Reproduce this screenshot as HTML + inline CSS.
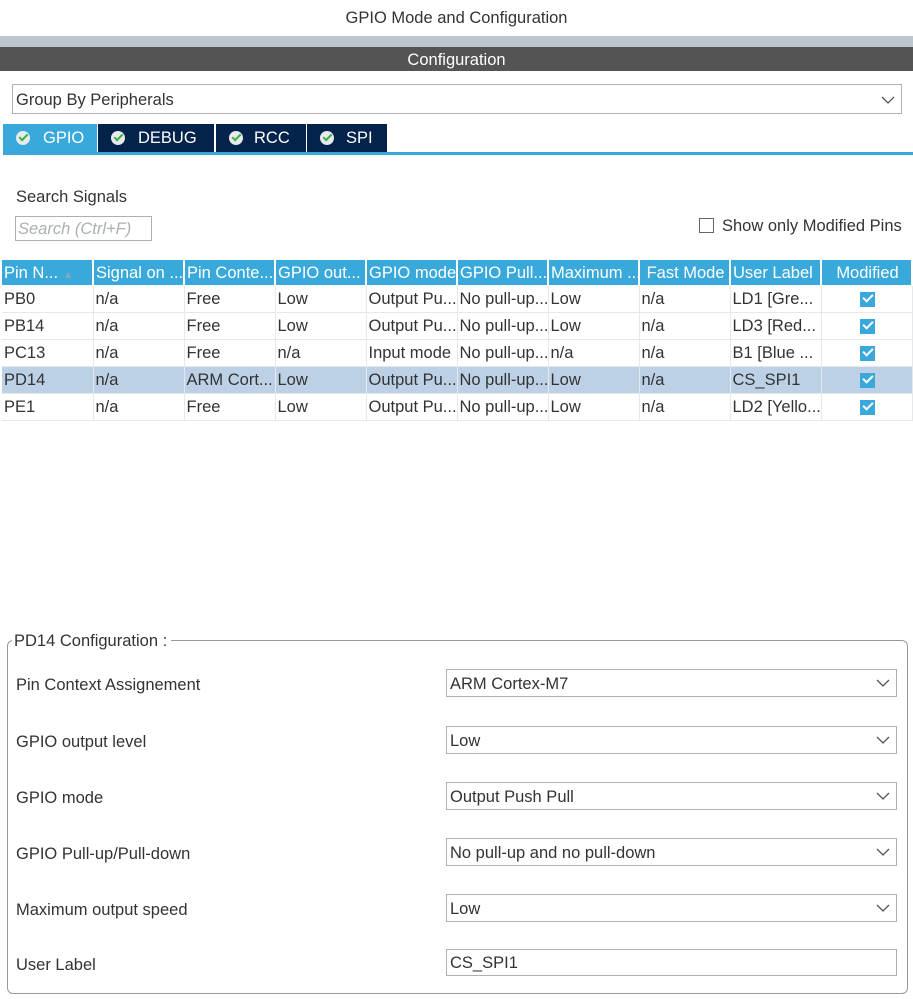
<!DOCTYPE html>
<html><head><meta charset="utf-8"><style>
*{box-sizing:border-box;margin:0;padding:0}
body{width:913px;height:999px;background:#fff;font-family:"Liberation Sans",sans-serif;color:#333;position:relative;overflow:hidden;font-size:16.5px}
.a{position:absolute}
.sel{position:absolute;border:1px solid #aab0b4;background:#fff;height:28px;padding-left:3px;line-height:28px;font-size:16.5px;color:#333}
.chev{position:absolute;right:6px;top:9px;width:14px;height:8px}
.tab{position:absolute;top:124px;height:28px;background:#03234b;color:#fff;font-size:16.5px;line-height:29px}
.tab i{position:absolute;top:7px;left:13px;width:14px;height:14px;border-radius:50%;background:#e8eaed}
.tab i:after{content:"";position:absolute;left:3px;top:3px;width:7px;height:3px;border-left:2px solid #3db04a;border-bottom:2px solid #3db04a;transform:rotate(-45deg)}
table{position:absolute;left:2px;top:260px;border-collapse:collapse;table-layout:fixed;width:910px}
td,th{height:27px;font-size:16.5px;white-space:nowrap;overflow:hidden;padding-left:2px;padding-top:2px;text-align:left;font-weight:normal;border-right:2px solid #fff;border-bottom:1px solid #e6e8ea}
td{border-right:1px solid #e6e8ea}
th{background:#39a9dc;color:#fff;height:25px;border-bottom:1px solid #fff}
tr.s td{background:#bcd1e6}
.cb{display:inline-block;width:15px;height:15px;background:#39a9dc;position:relative;vertical-align:middle}
.cb:after{content:"";position:absolute;left:3px;top:2px;width:8px;height:4px;border-left:2px solid #fff;border-bottom:2px solid #fff;transform:rotate(-45deg)}
.lbl{position:absolute;left:16px;font-size:16.5px;color:#333}
</style></head><body>
<div class="a" style="left:0;top:9px;width:913px;text-align:center">GPIO Mode and Configuration</div>
<div class="a" style="left:0;top:36px;width:913px;height:11px;background:#bcc5cb"></div>
<div class="a" style="left:0;top:47px;width:913px;height:24px;background:#545454;color:#fff;text-align:center;line-height:26px">Configuration</div>
<div class="sel" style="left:12px;top:84px;width:890px;height:30px;line-height:31px">Group By Peripherals<svg class="chev" style="top:11px" viewBox="0 0 14 8"><path d="M1 1L7 7L13 1" fill="none" stroke="#555" stroke-width="1.3"/></svg></div>
<div class="tab" style="left:3px;width:94px;background:#39a9dc"><i></i><span style="position:absolute;left:40px">GPIO</span></div>
<div class="tab" style="left:98px;width:116px"><i></i><span style="position:absolute;left:40px">DEBUG</span></div>
<div class="tab" style="left:216px;width:90px"><i></i><span style="position:absolute;left:38px">RCC</span></div>
<div class="tab" style="left:307px;width:80px"><i></i><span style="position:absolute;left:39px">SPI</span></div>
<div class="a" style="left:3px;top:152px;width:910px;height:3px;background:#39a9dc"></div>
<div class="a" style="left:16px;top:188px">Search Signals</div>
<div class="a" style="left:15px;top:216px;width:137px;height:25px;border:1px solid #aab0b4;font-style:italic;color:#aab0b4;padding-left:2px;line-height:25px">Search (Ctrl+F)</div>
<div class="a" style="left:699px;top:218px;width:15px;height:15px;border:1.5px solid #666"></div>
<div class="a" style="left:722px;top:217px">Show only Modified Pins</div>
<table>
<colgroup><col style="width:91px"><col style="width:91px"><col style="width:91px"><col style="width:91px"><col style="width:91px"><col style="width:91px"><col style="width:91px"><col style="width:91px"><col style="width:91px"><col style="width:91px"></colgroup>
<tr><th>Pin N... <span style="color:#7fa7bf;font-size:11px">&#9650;</span></th><th>Signal on ...</th><th>Pin Conte...</th><th>GPIO out...</th><th>GPIO mode</th><th>GPIO Pull...</th><th>Maximum ...</th><th>&nbsp;Fast Mode</th><th>User Label</th><th style="text-align:center">Modified</th></tr>
<tr><td>PB0</td><td>n/a</td><td>Free</td><td>Low</td><td>Output Pu...</td><td>No pull-up...</td><td>Low</td><td>n/a</td><td>LD1 [Gre...</td><td style="text-align:center"><span class="cb"></span></td></tr>
<tr><td>PB14</td><td>n/a</td><td>Free</td><td>Low</td><td>Output Pu...</td><td>No pull-up...</td><td>Low</td><td>n/a</td><td>LD3 [Red...</td><td style="text-align:center"><span class="cb"></span></td></tr>
<tr><td>PC13</td><td>n/a</td><td>Free</td><td>n/a</td><td>Input mode</td><td>No pull-up...</td><td>n/a</td><td>n/a</td><td>B1 [Blue ...</td><td style="text-align:center"><span class="cb"></span></td></tr>
<tr class="s"><td>PD14</td><td>n/a</td><td>ARM Cort...</td><td>Low</td><td>Output Pu...</td><td>No pull-up...</td><td>Low</td><td>n/a</td><td>CS_SPI1</td><td style="text-align:center"><span class="cb"></span></td></tr>
<tr><td>PE1</td><td>n/a</td><td>Free</td><td>Low</td><td>Output Pu...</td><td>No pull-up...</td><td>Low</td><td>n/a</td><td>LD2 [Yello...</td><td style="text-align:center"><span class="cb"></span></td></tr>
</table>
<div class="a" style="left:7px;top:640px;width:901px;height:354px;border:1px solid #999;border-radius:6px"></div>
<div class="a" style="left:12px;top:632px;background:#fff;padding:0 4px 0 2px">PD14 Configuration :</div>
<div class="lbl" style="top:676px">Pin Context Assignement</div>
<div class="lbl" style="top:733px">GPIO output level</div>
<div class="lbl" style="top:789px">GPIO mode</div>
<div class="lbl" style="top:845px">GPIO Pull-up/Pull-down</div>
<div class="lbl" style="top:901px">Maximum output speed</div>
<div class="lbl" style="top:956px">User Label</div>
<div class="sel" style="left:446px;top:669px;width:451px">ARM Cortex-M7<svg class="chev" viewBox="0 0 14 8"><path d="M1 1L7 7L13 1" fill="none" stroke="#555" stroke-width="1.3"/></svg></div>
<div class="sel" style="left:446px;top:726px;width:451px">Low<svg class="chev" viewBox="0 0 14 8"><path d="M1 1L7 7L13 1" fill="none" stroke="#555" stroke-width="1.3"/></svg></div>
<div class="sel" style="left:446px;top:782px;width:451px">Output Push Pull<svg class="chev" viewBox="0 0 14 8"><path d="M1 1L7 7L13 1" fill="none" stroke="#555" stroke-width="1.3"/></svg></div>
<div class="sel" style="left:446px;top:838px;width:451px">No pull-up and no pull-down<svg class="chev" viewBox="0 0 14 8"><path d="M1 1L7 7L13 1" fill="none" stroke="#555" stroke-width="1.3"/></svg></div>
<div class="sel" style="left:446px;top:894px;width:451px">Low<svg class="chev" viewBox="0 0 14 8"><path d="M1 1L7 7L13 1" fill="none" stroke="#555" stroke-width="1.3"/></svg></div>
<div class="sel" style="left:446px;top:949px;width:451px;height:27px;line-height:27px">CS_SPI1</div>
</body></html>
